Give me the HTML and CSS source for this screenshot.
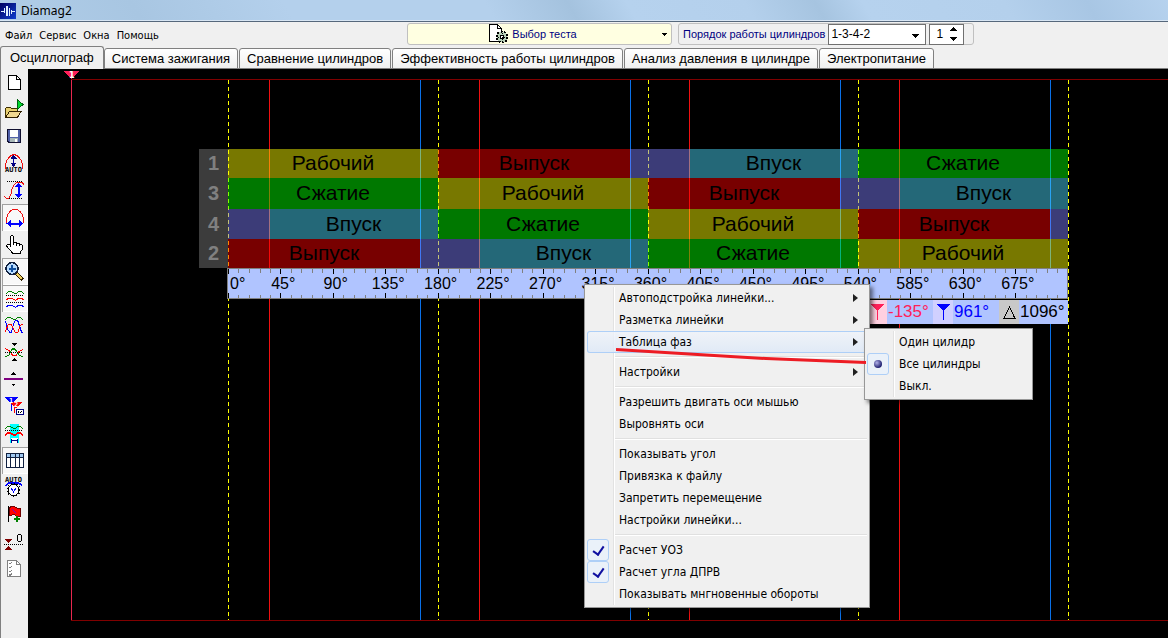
FILE: index.html
```html
<!DOCTYPE html>
<html lang="ru">
<head>
<meta charset="utf-8">
<title>Diamag2</title>
<link rel="stylesheet" href="styles.css">
</head>
<body>
<div class="app">
  <header class="titlebar">
    <svg class="app-icon" viewBox="0 0 16 16"><defs><linearGradient id="ai" x1="0" y1="0" x2="1" y2="1"><stop offset="0" stop-color="#000060"/><stop offset="1" stop-color="#1040d0"/></linearGradient></defs><rect width="16" height="16" rx="1" fill="url(#ai)"/><path d="M1 8h3v1H1zM4 5h1v5H4zM6 3h2v10H6zM9 5h1v8H9zM11 7h1v4h-1zM12 8h3v1h-3z" fill="#dff0ff"/></svg>
    <h1 class="title">Diamag2</h1>
  </header>

  <div class="menubar">
    <nav class="menus">
      <button class="menu">Файл</button><button class="menu">Сервис</button><button class="menu">Окна</button><button class="menu">Помощь</button>
    </nav>
    <button class="test-picker">
      <svg width="22" height="20" viewBox="0 0 22 20"><path d="M1.500.500h8l4 4v12.500h-12z" fill="#fff" stroke="#000"/><path d="M9.500.500v4h4" fill="none" stroke="#000"/><circle cx="14" cy="13" r="5.500" fill="#b8d0b8" stroke="#000" stroke-width="2" stroke-dasharray="2 1.400"/><circle cx="14" cy="13" r="4.500" fill="#b8d0b8"/><circle cx="14" cy="13" r="2" fill="#fff" stroke="#000"/><path d="M14 9v8M10 13h8" stroke="#000" stroke-dasharray="1 1"/></svg>
      <span>Выбор теста</span>
      <svg class="picker-arrow" width="5" height="3" viewBox="0 0 5 3"><path d="M0 0h5L2.500 3z"/></svg>
    </button>
    <div class="order-panel">
      <label for="order">Порядок работы цилиндров</label>
      <select id="order" class="order-select"><option>1-3-4-2</option></select>
      <div class="spin">
        <input type="text" value="1" aria-label="Номер цилиндра">
        <svg width="7" height="14" viewBox="0 0 7 14"><path d="M0 4h7L3.500 0zM0 10h7l-3.500 4z"/></svg>
      </div>
    </div>
  </div>

  <div class="tabs" role="tablist">
    <button class="tab active" role="tab">Осциллограф</button>
    <button class="tab" role="tab">Система зажигания</button>
    <button class="tab" role="tab">Сравнение цилиндров</button>
    <button class="tab" role="tab">Эффективность работы цилиндров</button>
    <button class="tab" role="tab">Анализ давления в цилиндре</button>
    <button class="tab" role="tab">Электропитание</button>
  </div>

  <main class="workspace">
    <aside class="tools">
      <button class="tool" aria-label="Новый"><svg viewBox="0 0 26 27"><path d="M6.500 6.500h8l4 4v9.500h-12z" fill="#fff" stroke="#000"/><path d="M14.500 6.500v4h4" fill="none" stroke="#000"/></svg></button>
      <button class="tool" aria-label="Открыть"><svg viewBox="0 0 26 27"><path d="M3.500 20.500v-8l1-1h4l1 1h6v8z" fill="#e8d070" stroke="#403000"/><path d="M3.500 21.500l4-6h11.500l-3.500 6z" fill="#f0d890" stroke="#302000"/><path d="M15.500 4v9l5.500-4.500z" fill="#00d830" stroke="#006010"/></svg></button>
      <button class="tool" aria-label="Сохранить"><svg viewBox="0 0 26 27"><path d="M5.500 6.500h13v13h-11.500l-1.500-1.500z" fill="#5060a8" stroke="#101030" stroke-width="1.500"/><rect x="8" y="7" width="8" height="7" fill="#fff"/><rect x="8" y="15" width="8" height="4" fill="#a8b8b8"/><rect x="13" y="16" width="2" height="3" fill="#fff"/></svg></button>
      <button class="tool" aria-label="Автомасштаб"><svg viewBox="0 0 26 27"><path d="M3.500 19v-4l1-4 2-3 2-2 3-1.500h1l3 1.500 2 2 2 3 1 4v4" fill="none" stroke="#f01010"/><path d="M11.500 6v10" stroke="#0000a0"/><path d="M8.500 8.500h6l-3-4zM8.500 13h6l-3 4z" fill="#000080"/><text x="3" y="22" class="pix">AUTO</text></svg></button>
      <button class="tool" aria-label="Масштаб по вертикали"><svg viewBox="0 0 26 27"><path d="M5 4.500h16M5 21.500h16" stroke="#000" stroke-dasharray="1 1"/><path d="M2 19l2 2h3l2-4 1-5 2-4 3-3h5l2 3" fill="none" stroke="#f01010"/><path d="M16.500 8v12" stroke="#0000ff" stroke-width="2"/><path d="M13 10h7l-3.500-4.500zM13 17h7l-3.500 4.500z" fill="#00f"/></svg></button>
      <button class="tool pressed" aria-label="Масштаб по горизонтали"><svg viewBox="0 0 26 27"><path d="M4.500 19v-4l1-4 2-3 3-2.500h5l3 2.500 2 3 1 4v4" fill="none" stroke="#f01010"/><path d="M7 19.500h13" stroke="#00f" stroke-width="2"/><path d="M9 16v7l-4.500-3.500zM17 16v7l4.500-3.500z" fill="#00f"/></svg></button>
      <button class="tool" aria-label="Рука"><svg viewBox="0 0 26 27"><path d="M8.500 15V5.500l1-1h1l1 1V11h2l1 1h2l1 1h2l1 2v3l-2 3v1.500h-8l-1-2-4-4-1-2 1-1h2z" fill="#fff" stroke="#000"/><path d="M11.500 11v3M14.500 12v3M17.500 13v2" stroke="#000"/></svg></button>
      <button class="tool pressed" aria-label="Лупа"><svg viewBox="0 0 26 27"><path d="M14 15l7 7" stroke="#302000" stroke-width="4"/><path d="M15 16l5 5" stroke="#f0d060" stroke-width="2"/><circle cx="10" cy="10.500" r="6" fill="#b8dcff" stroke="#102040" stroke-width="1.500"/><path d="M10 7v7M6.500 10.500h7" stroke="#1050a0" stroke-width="2"/></svg></button>
      <button class="tool pressed" aria-label="Каналы раздельно"><svg viewBox="0 0 26 27"><g fill="none"><path d="M4 8.500l3-2h2l4 2h1l3-2h2l3 2" stroke="#008000"/><path d="M4 10.500h18M4 17.500h18" stroke="#000" stroke-dasharray="1 1"/><path d="M4 15l3-2h2l4 2h1l3-2h2l3 2" stroke="#f00"/><path d="M4 22l3-2h2l4 2h1l3-2h2l3 2" stroke="#00f"/></g></svg></button>
      <button class="tool" aria-label="Каналы вместе"><svg viewBox="0 0 26 27"><g fill="none"><path d="M3 7.500l3-2h2l4 2h1l3-2h2l3 2" stroke="#008000"/><path d="M3.500 9l2 8 2 3h2l2-8 2-4h2l2 6 2 6 1 1" stroke="#00f"/><path d="M3 20l1-2 2-5 3-1 2 4 2 4h3l2-6 2-2h1" stroke="#f00"/></g></svg></button>
      <button class="tool" aria-label="Совместить"><svg viewBox="0 0 26 27"><g fill="none"><path d="M3 9.500l4 2 4 5h3l3-4 4-2" stroke="#f00" stroke-width="1.200"/><path d="M3 18l4-2 3-6h3l4 6 4 2" stroke="#008000" stroke-width="1.200"/><path d="M3 13.500h18" stroke="#000" stroke-dasharray="1 1"/></g><path d="M9 4h6l-3 3zM9 22h6l-3-3z"/></svg></button>
      <button class="tool" aria-label="Нулевая линия"><svg viewBox="0 0 26 27"><path d="M2 13h19" stroke="#800080" stroke-width="2"/><path d="M9 9h5l-2.500-3zM9 17.500h5l-2.500 3z"/></svg></button>
      <button class="tool" aria-label="Маркеры"><svg viewBox="0 0 26 27"><path d="M3 4h13l-6 7h-1z" fill="#00f"/><path d="M9.500 9v9" stroke="#00f"/><path d="M8 9h12l-6 6h-1z" fill="#f00"/><path d="M12.500 13v7" stroke="#f00"/><text x="7" y="10" class="pix light">1</text><text x="12" y="14" class="pix light">2</text><rect x="14.500" y="16.500" width="7" height="5" fill="#fff" stroke="#000080"/><path d="M16.500 18v2M18 20l2-2" stroke="#000"/></svg></button>
      <button class="tool" aria-label="Интервал"><svg viewBox="0 0 26 27"><path fill="#0ff" d="M8 4h9v19H8z"/><g fill="none"><path d="M3 8.500l3-2h2l4 2h1l3-2h2l3 2" stroke="#008000"/><path d="M3 10.500h18" stroke="#000" stroke-dasharray="1 1"/><path d="M3 15l3-2h2l4 2h1l3-2h2l3 2" stroke="#f00" stroke-width="1.500"/></g><path d="M9 18h7v5H9z" fill="#fff"/><path d="M9 20.500h7M9.500 18.500v4M15.500 18.500v4" stroke="#000080"/></svg></button>
      <button class="tool pressed" aria-label="Таблица"><svg viewBox="0 0 26 27"><rect x="4.500" y="6.500" width="17" height="14" fill="#fff" stroke="#102040"/><path d="M5 7h16v3H5z" fill="#a0c8f0"/><path d="M4 10.500h18M8.500 6v15M13 6v15M17.500 6v15" stroke="#102040"/></svg></button>
      <button class="tool" aria-label="Автоизмерение"><svg viewBox="0 0 26 27"><text x="3" y="8" class="pix">AUTO</text><path d="M3.500 11.500l3-2.500h10l4 2.500" fill="none" stroke="#00f" stroke-width="1.500"/><circle cx="11.500" cy="16" r="5.500" fill="#fff" stroke="#000"/><circle cx="11.500" cy="16" r="6.500" fill="none" stroke="#000" stroke-dasharray="1 2"/><path d="M9 14l2.500 4 2.500-4" fill="none" stroke="#00f"/></svg></button>
      <button class="tool" aria-label="Флаг"><svg viewBox="0 0 26 27"><path d="M7 7l3-2 3 1 2 1h3v8h-4l-2-2-2 1-3 1z" fill="#f00" stroke="#700000"/><path d="M6.500 5v16" stroke="#000"/><path d="M10 8l4 4" stroke="#8000c0"/><path d="M15 15v6M12 18h6" stroke="#008000" stroke-width="2"/></svg></button>
      <button class="tool" aria-label="Обнулить"><svg viewBox="0 0 26 27"><path d="M3 11h7l-3.500 4zM3 22h7l-3.500-4z" fill="#800000"/><path d="M2 16.500h19" stroke="#000" stroke-dasharray="1 1"/><rect x="15.500" y="6.500" width="4" height="7" rx="2" fill="none" stroke="#000"/></svg></button>
      <button class="tool" aria-label="Отчёт"><svg viewBox="0 0 26 27"><path d="M5.500 5.500h9l4 4v12h-13z" fill="#fff" stroke="#808080"/><path d="M14.500 5.500v4h4M7 8l1 1 2-2M7 12l1 1 2-2M7 16l1 1 2-2M7 19.500l1 1 2-2" fill="none" stroke="#808080"/></svg></button>
    </aside>

    <section class="plot">
      <div class="frame">
        <svg class="marker" width="15" height="9" viewBox="0 0 15 9"><path d="M0 0h15L8 8H7z" fill="#ff2058"/><text x="5" y="7">1</text></svg>
        <svg class="guides">
          <g class="phase">
            <line x1="156.500" x2="156.500" y2="100%"/><line x1="366.500" x2="366.500" y2="100%"/><line x1="576.500" x2="576.500" y2="100%"/><line x1="786.500" x2="786.500" y2="100%"/><line x1="996.500" x2="996.500" y2="100%"/>
          </g>
          <g class="close">
            <line x1="197.500" x2="197.500" y2="100%"/><line x1="407.500" x2="407.500" y2="100%"/><line x1="617.500" x2="617.500" y2="100%"/><line x1="827.500" x2="827.500" y2="100%"/>
          </g>
          <g class="open">
            <line x1="348.500" x2="348.500" y2="100%"/><line x1="558.500" x2="558.500" y2="100%"/><line x1="768.500" x2="768.500" y2="100%"/><line x1="978.500" x2="978.500" y2="100%"/>
          </g>
        </svg>
        <div class="phases">
          <table class="strokes">
            <colgroup><col class="c-num"><col class="c-lap"><col class="c-mid"><col class="c-end"><col class="c-lap"><col class="c-mid"><col class="c-end"><col class="c-lap"><col class="c-mid"><col class="c-end"><col class="c-lap"><col class="c-mid"><col class="c-end"></colgroup>
            <tr><th>1</th><td colspan="3" class="work">Рабочий</td><td colspan="2" class="exhaust">Выпуск</td><td colspan="2" class="overlap"></td><td colspan="2" class="intake">Впуск</td><td colspan="3" class="compress">Сжатие</td></tr>
            <tr><th>3</th><td colspan="3" class="compress">Сжатие</td><td colspan="3" class="work">Рабочий</td><td colspan="2" class="exhaust">Выпуск</td><td colspan="2" class="overlap"></td><td colspan="2" class="intake">Впуск</td></tr>
            <tr><th>4</th><td class="overlap"></td><td colspan="2" class="intake">Впуск</td><td colspan="3" class="compress">Сжатие</td><td colspan="3" class="work">Рабочий</td><td colspan="2" class="exhaust">Выпуск</td><td class="overlap"></td></tr>
            <tr><th>2</th><td colspan="2" class="exhaust">Выпуск</td><td colspan="2" class="overlap"></td><td colspan="2" class="intake">Впуск</td><td colspan="3" class="compress">Сжатие</td><td colspan="3" class="work">Рабочий</td></tr>
          </table>
          <div class="ruler">
            <svg class="ticks"><defs><pattern id="tk" width="105" height="29" patternUnits="userSpaceOnUse"><path d="M10.500 0v4M21.500 0v4M32.500 0v4M42.500 0v4M63.500 0v4M73.500 0v4M84.500 0v4M94.500 0v4M10.500 26v3M21.500 26v3M32.500 26v3M42.500 26v3M63.500 26v3M73.500 26v3M84.500 26v3M94.500 26v3" stroke="#808080"/><path d="M.500 0v5M52.500 0v5M.500 24v5M52.500 24v5" stroke="#000"/></pattern></defs><rect width="100%" height="29" fill="url(#tk)"/></svg>
            <span class="zero">0°</span><span>45°</span><span>90°</span><span>135°</span><span>180°</span><span>225°</span><span>270°</span><span>315°</span><span>360°</span><span>405°</span><span>450°</span><span>495°</span><span>540°</span><span>585°</span><span>630°</span><span>675°</span>
          </div>
          <div class="readouts">
            <span class="key pink"><svg width="13" height="16" viewBox="0 0 13 16"><path d="M0 0h13L7 7v9H6V7z" fill="#ff2058"/></svg></span><span class="val pink-text">-135°</span>
            <span class="key blue"><svg width="13" height="16" viewBox="0 0 13 16"><path d="M0 0h13L7 7v9H6V7z" fill="#00f"/></svg></span><span class="val blue-text">961°</span>
            <span class="key grey"><svg width="13" height="16" viewBox="0 0 13 16"><path d="M1 14.500L6.500 3 12 14.500z" fill="none" stroke="#000"/></svg></span><span class="val">1096°</span>
          </div>
        </div>
      </div>
    </section>
  </main>

  <div class="popup context" role="menu">
    <button class="item sub">Автоподстройка линейки...</button>
    <button class="item sub">Разметка линейки</button>
    <button class="item sub hot">Таблица фаз</button>
    <hr>
    <button class="item sub">Настройки</button>
    <hr>
    <button class="item">Разрешить двигать оси мышью</button>
    <button class="item">Выровнять оси</button>
    <hr>
    <button class="item">Показывать угол</button>
    <button class="item">Привязка к файлу</button>
    <button class="item">Запретить перемещение</button>
    <button class="item">Настройки линейки...</button>
    <hr>
    <label class="item"><input type="checkbox" class="tick" checked>Расчет УОЗ</label>
    <label class="item"><input type="checkbox" class="tick" checked>Расчет угла ДПРВ</label>
    <label class="item"><input type="checkbox" class="tick">Показывать мнгновенные обороты</label>
  </div>
  <div class="popup submenu" role="menu">
    <label class="item"><input type="radio" name="cyl" class="tick">Один цилидр</label>
    <label class="item"><input type="radio" name="cyl" class="tick" checked>Все цилиндры</label>
    <label class="item"><input type="radio" name="cyl" class="tick">Выкл.</label>
  </div>
  <svg class="stroke-note" width="250" height="18" viewBox="0 0 250 18"><path d="M0 2.500L98 8.500 150 11.500 250 15.500" fill="none" stroke="#ed1c24" stroke-width="3"/></svg>
</div>
</body>
</html>
```
FILE: styles.css
```css
* { box-sizing: border-box; }
body { margin: 0; font-family: "Noto Sans", sans-serif; font-size: 12px; color: #000; }
button { font: inherit; color: inherit; margin: 0; padding: 0; border: 0; background: none; }
svg { display: block; flex: none; shape-rendering: crispEdges; }
.app { position: relative; min-height: 100vh; display: flex; flex-direction: column; background: #f0f0f0; overflow: hidden; }

.titlebar {
  display: flex; align-items: center; gap: 5px; height: 22px;
  border-bottom: 1px solid #56687c;
  background:
    radial-gradient(ellipse at 45px 10px, rgba(255,255,255,.6), rgba(255,255,255,0) 60px),
    linear-gradient(60deg, #b0cde8 0, #a8c6e2 12%, #b4d0ec 25%, #b4d0ec 42%, #a4c2de 49%, #b6d2ee 54%, #b4d0ec 64%, #a6c4e0 70%, #b6d2ee 74%, #b4d0ec 86%, #a8c6e4 93%, #b6d2ee);
  box-shadow: inset 0 -1px #d8e6f4;
}
.app-icon { width: 16px; height: 16px; }
.title { margin: 0; font-size: 12px; font-weight: 400; line-height: 20px; }

.menubar { display: flex; align-items: center; height: 25px; gap: 6px; padding-bottom: 1px; }
.menus { display: flex; gap: 7px; flex: 0 0 401px; padding-left: 5px; padding-top: 2px; font-family: "DejaVu Sans Condensed", sans-serif; font-size: 11px; }
.test-picker {
  flex: 0 0 265px; height: 22px; display: flex; align-items: center; justify-content: center; gap: 2px; padding-right: 14px;
  position: relative; border: 1px solid #c0c0c0; border-radius: 3px; background: #ffffe1; color: #000080; font-family: "Liberation Sans", sans-serif; font-size: 11px;
}
.picker-arrow { position: absolute; right: 4px; top: 9px; }
.order-panel {
  display: flex; align-items: center; gap: 3px; height: 22px; padding: 0 9px 0 4px;
  border: 1px solid #c0c0c0; border-radius: 3px; color: #000080; font-family: "Liberation Sans", sans-serif; font-size: 11px; white-space: nowrap;
}
.order-select {
  width: 98px; height: 21px; padding: 0 2px; border: 1px solid #707070; border-radius: 0; appearance: none;
  font: 12px "Liberation Sans", sans-serif; color: #000;
  background: linear-gradient(#000, #000) right 6px top 9px / 7px 1px no-repeat, linear-gradient(#000, #000) right 7px top 10px / 5px 1px no-repeat, linear-gradient(#000, #000) right 8px top 11px / 3px 1px no-repeat, linear-gradient(#000, #000) right 9px top 12px / 1px 1px no-repeat, #fff;
}
.spin { display: flex; align-items: center; width: 35px; height: 21px; border: 1px solid #707070; background: #fff; }
.spin input { width: 20px; padding: 0 0 0 6px; border: 0; background: none; font: 12px "Liberation Sans", sans-serif; }

.tabs { display: flex; align-items: flex-end; gap: 1px; height: 22px; font-family: "Liberation Sans", sans-serif; font-size: 13px; box-shadow: inset 0 -1px #808080; }
.tab {
  height: 21px; padding: 0 7px; border: 1px solid #808080; border-radius: 3px 3px 0 0; white-space: nowrap;
  background: linear-gradient(#fff, #f0f0f0);
}
.tab.active { height: 23px; padding: 0 9px 2px; border-bottom: 0; background: #f0f0f0; margin-right: -1px; }

.workspace { flex: 1; display: flex; }
.tools { flex: 0 0 28px; display: flex; flex-direction: column; border-left: 1px solid #808080; padding-left: 1px; background: #f0f0f0; }
.tool { width: 26px; height: 27px; }
.tool svg { width: 26px; height: 27px; }
.tool.pressed { background: #f8f8f8; box-shadow: inset 1px 1px #a0a0a0, inset -1px -1px #fff; }
.pix { font: bold 7px "DejaVu Sans Mono", monospace; }
.pix.light { fill: #fff; }

.plot { flex: 1; display: flex; min-width: 0; padding: 10px 0 17px 43px; background: #000; }
.frame { position: relative; flex: 1; min-width: 0; border: solid #800000; border-width: 1px 0; box-shadow: inset 1px 0 #e8274f; }
.marker { position: absolute; left: -7px; top: -9px; }
.marker text { font: bold 8px "DejaVu Sans", sans-serif; fill: #fff; }
.guides { position: absolute; left: 1px; top: 0; width: 100%; height: 100%; }
.guides .phase { stroke: #ff0; stroke-dasharray: 4 3; }
.guides .close { stroke: #f01010; }
.guides .open { stroke: #0a70e8; }

.phases { position: relative; width: 869px; margin: 69px 0 0 128px; font-family: "Liberation Sans", sans-serif; }
.strokes { table-layout: fixed; width: 100%; border-collapse: collapse; font-size: 21px; line-height: 28px; }
.strokes tr { height: 30px; }
.strokes tr:first-child, .strokes tr:last-child { height: 29px; }
.strokes tr:nth-child(2) { height: 31px; }
.strokes td, .strokes th { padding: 0 0 1px; text-align: center; }
.strokes th { background: #3c3c3c; color: #808080; font-size: 20px; }
.c-num { width: 29px; }
.c-lap { width: 41px; }
.c-mid { width: 151px; }
.c-end { width: 18px; }
.work { background: rgba(255,255,0,.47); }
.exhaust { background: rgba(255,0,0,.47); }
.compress { background: rgba(0,255,0,.47); }
.intake { background: rgba(77,221,255,.47); }
.overlap { background: rgba(128,128,255,.47); }

.ruler {
  position: relative; display: flex; align-items: center; height: 31px; margin-left: 28px; padding-right: 23px;
  border: 1px solid #808080; background: #b0c4ff; font-size: 16px;
}
.ticks { position: absolute; left: 0; top: 0; width: 100%; height: 29px; }
.ruler span { position: relative; flex: 1 1 0; text-align: center; }
.ruler .zero { flex: 0 0 29px; text-align: left; padding-left: 2px; }

.readouts { display: flex; justify-content: flex-end; margin-top: 1px; height: 24px; font-size: 17px; line-height: 24px; }
.key { display: flex; align-items: center; justify-content: center; width: 20px; }
.val { width: 46px; padding-left: 1px; background: #b0c4ff; }
.val:last-child { width: 49px; }
.pink { background: #ffd0e0; }
.blue { background: #d0d0ff; }
.grey { background: #c8c8c8; }
.pink-text { color: #ff2058; }
.blue-text { color: #00f; }

.popup {
  position: absolute; padding: 2px; border: 1px solid #979797; font-family: "DejaVu Sans Condensed", sans-serif; font-size: 12px;
  background: linear-gradient(#e2e2e2, #e2e2e2) 28px 2px / 1px calc(100% - 4px) no-repeat, linear-gradient(#fff, #fff) 29px 2px / 1px calc(100% - 4px) no-repeat, #f0f0f0;
  box-shadow: 3px 3px 4px rgba(0,0,0,.5);
}
.context { left: 584px; top: 284px; width: 286px; }
.submenu { left: 864px; top: 328px; width: 169px; }
.item { position: relative; display: flex; align-items: center; width: 100%; height: 22px; padding: 0 0 0 32px; border-radius: 3px; white-space: nowrap; }
.sub::after { content: ""; position: absolute; right: 9px; top: 7px; border: 4px solid transparent; border-left: 5px solid #202020; border-right: 0; }
.hot { background: linear-gradient(rgba(240,244,250,.8), rgba(220,232,248,.8)); box-shadow: inset 0 0 0 1px #aecff7; }
.popup hr { height: 2px; margin: 3px 0 3px 28px; border: 0; background: linear-gradient(#e0e0e0 50%, #fff 50%); }
.tick { appearance: none; position: absolute; left: 0; top: 0; width: 22px; height: 22px; margin: 0; border-radius: 3px; }
.tick:checked { border: 1px solid #aecff7; background: #eaf1f9; }
.tick[type="checkbox"]:checked::after { content: ""; position: absolute; left: 7px; top: 4px; width: 5px; height: 9px; border: solid #1010a0; border-width: 0 2px 2px 0; transform: rotate(35deg); }
.tick[type="radio"]:checked::after { content: ""; position: absolute; left: 6px; top: 6px; width: 8px; height: 8px; border-radius: 50%; background: radial-gradient(circle at 35% 35%, #b0b0e8, #202070 70%); }
.stroke-note { position: absolute; left: 616px; top: 347px; shape-rendering: auto; }
```
